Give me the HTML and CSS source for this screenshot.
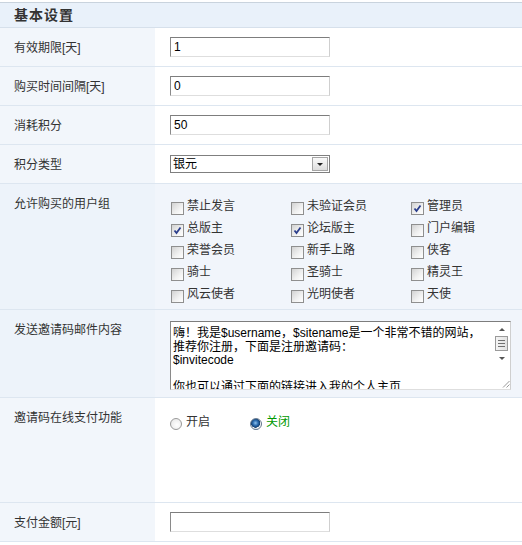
FILE: index.html
```html
<!DOCTYPE html>
<html lang="zh-CN">
<head>
    <meta charset="UTF-8">
    <title>基本设置</title>
    <link rel="stylesheet" href="styles.css">
</head>
<body>
    <table class="tb">
        <colgroup>
            <col class="c-lb">
            <col>
        </colgroup>
        <tr class="hd">
            <th colspan="2">基本设置</th>
        </tr>
        <tr>
            <td class="lb">有效期限[天]</td>
            <td class="vl"><input type="text" class="txt" value="1"></td>
        </tr>
        <tr>
            <td class="lb">购买时间间隔[天]</td>
            <td class="vl"><input type="text" class="txt" value="0"></td>
        </tr>
        <tr>
            <td class="lb">消耗积分</td>
            <td class="vl"><input type="text" class="txt" value="50"></td>
        </tr>
        <tr>
            <td class="lb">积分类型</td>
            <td class="vl">
                <select class="sel">
                    <option>银元</option>
                    <option>金币</option>
                </select>
            </td>
        </tr>
        <tr class="hover">
            <td class="lb">允许购买的用户组</td>
            <td class="vl vl-groups">
                <div class="groups">
                    <label><input type="checkbox" class="ck">禁止发言</label>
                    <label><input type="checkbox" class="ck">未验证会员</label>
                    <label><input type="checkbox" class="ck" checked>管理员</label>
                    <label><input type="checkbox" class="ck" checked>总版主</label>
                    <label><input type="checkbox" class="ck" checked>论坛版主</label>
                    <label><input type="checkbox" class="ck">门户编辑</label>
                    <label><input type="checkbox" class="ck">荣誉会员</label>
                    <label><input type="checkbox" class="ck">新手上路</label>
                    <label><input type="checkbox" class="ck">侠客</label>
                    <label><input type="checkbox" class="ck">骑士</label>
                    <label><input type="checkbox" class="ck">圣骑士</label>
                    <label><input type="checkbox" class="ck">精灵王</label>
                    <label><input type="checkbox" class="ck">风云使者</label>
                    <label><input type="checkbox" class="ck">光明使者</label>
                    <label><input type="checkbox" class="ck">天使</label>
                </div>
            </td>
        </tr>
        <tr class="hover">
            <td class="lb">发送邀请码邮件内容</td>
            <td class="vl vl-area">
                <div class="editor">
                    <textarea class="area">嗨！我是$username，$sitename是一个非常不错的网站，
推荐你注册，下面是注册邀请码：
$invitecode

你也可以通过下面的链接进入我的个人主页</textarea>
                    <div class="vbar">
                        <span class="arr up"></span>
                        <span class="thumb"><i></i><i></i><i></i></span>
                        <span class="arr down"></span>
                        <span class="grip">
                            <svg width="8" height="8" viewBox="0 0 8 8">
                                <path d="M7.5 1 L1 7.5 M7.5 4.5 L4.5 7.5" stroke="#999" stroke-width="1" fill="none"/>
                            </svg>
                        </span>
                    </div>
                </div>
            </td>
        </tr>
        <tr class="tall">
            <td class="lb">邀请码在线支付功能</td>
            <td class="vl">
                <div class="radios">
                    <label><input type="radio" class="rd" name="pay">开启</label>
                    <label class="on"><input type="radio" class="rd" name="pay" checked>关闭</label>
                </div>
            </td>
        </tr>
        <tr>
            <td class="lb">支付金额[元]</td>
            <td class="vl"><input type="text" class="txt" value=""></td>
        </tr>
    </table>
</body>
</html>
```

FILE: styles.css
```css
body {
    margin: 2px 0 0 0;
    padding: 0;
    background: #fff;
    color: #333;
    font-family: "Liberation Sans", "Noto Sans CJK SC", sans-serif;
    font-size: 12px;
}

.tb {
    width: 100%;
    table-layout: fixed;
    border-collapse: collapse;
    border-spacing: 0;
}

.tb col.c-lb {
    width: 155px;
}

.tb td,
.tb th {
    border-bottom: 1px solid #dde6f0;
    vertical-align: top;
}

/* 标题栏 */
.hd th {
    border-top: 1px solid #c9d3dd;
    border-bottom: 1px solid #d6e0eb;
    background-color: #e9f1fa;
    height: 24px;
    padding: 0 14px;
    text-align: left;
    font-size: 14px;
    font-weight: bold;
    letter-spacing: 1px;
    line-height: 24px;
    color: #333;
}

.lb {
    padding: 10px 0 8px 14px;
    line-height: 20px;
    background-color: #f2f6fb;
    white-space: nowrap;
}

.vl {
    padding: 9px 0 9px 15px;
    line-height: 20px;
    background-color: #fff;
}

.hover .lb {
    background-color: #edf3fa;
}

.hover .vl {
    background-color: #f1f5fb;
}

.tall td {
    height: 86px;
}

/* 输入框 */
.txt {
    box-sizing: border-box;
    width: 160px;
    height: 20px;
    margin: 0;
    padding: 1px 3px;
    border: 1px solid;
    border-color: #7d7d7d #cfcfcf #dedede #8a8a8a;
    background: #fff;
    color: #000;
    font-family: inherit;
    font-size: 12px;
    vertical-align: top;
    outline: none;
}

.sel {
    -webkit-appearance: none;
    appearance: none;
    box-sizing: border-box;
    width: 160px;
    height: 18px;
    margin: 1px 0 0 0;
    padding: 0 20px 0 2px;
    border: 1px solid #7f7f7f;
    border-radius: 0;
    background: #fff url("data:image/svg+xml,%3Csvg xmlns='http://www.w3.org/2000/svg' width='16' height='14'%3E%3Cdefs%3E%3ClinearGradient id='g' x1='0' y1='0' x2='0' y2='1'%3E%3Cstop offset='0' stop-color='%23fbfbfb'/%3E%3Cstop offset='1' stop-color='%23dcdcdc'/%3E%3C/linearGradient%3E%3C/defs%3E%3Crect x='0.5' y='0.5' width='15' height='13' fill='url(%23g)' stroke='%23a5a5a5'/%3E%3Cpath d='M5 6h6l-3 3z' fill='%23222'/%3E%3C/svg%3E") no-repeat right 1px center;
    color: #000;
    font-family: inherit;
    font-size: 12px;
    line-height: 16px;
    vertical-align: top;
    outline: none;
}

/* 用户组 */
.vl-groups {
    padding-top: 11px;
    padding-bottom: 4px;
}

.groups {
    display: grid;
    grid-template-columns: 120px 120px 120px;
}

.groups label,
.radios label {
    display: flex;
    align-items: center;
    height: 22px;
    white-space: nowrap;
}

.ck {
    -webkit-appearance: none;
    appearance: none;
    box-sizing: border-box;
    width: 13px;
    height: 13px;
    margin: 4px 3px 0 1px;
    border: 1px solid #8f8f8f;
    border-radius: 0;
    background: linear-gradient(135deg, #d2d2d2 0%, #f2f2f2 60%, #fff 100%);
    flex: none;
}

.ck:checked {
    background: url("data:image/svg+xml,%3Csvg xmlns='http://www.w3.org/2000/svg' width='11' height='11'%3E%3Cpath d='M2.5 5.5l2 2.5 4-5.5' stroke='%232b3e8c' stroke-width='1.8' fill='none'/%3E%3C/svg%3E") no-repeat center,
        linear-gradient(135deg, #d2d2d2 0%, #f2f2f2 60%, #fff 100%);
}

/* 邮件内容 */
.vl-area {
    padding-top: 11px;
    padding-bottom: 7px;
}

.editor {
    box-sizing: border-box;
    display: flex;
    width: 341px;
    height: 69px;
    border: 1px solid;
    border-color: #7d7d7d #cfcfcf #dedede #8a8a8a;
    background: #fff;
}

.area {
    flex: 1;
    margin: 0;
    padding: 5px 2px 0 2px;
    border: none;
    resize: none;
    overflow: hidden;
    color: #000;
    font-family: inherit;
    font-size: 12px;
    line-height: 13.5px;
    outline: none;
}

.vbar {
    display: flex;
    flex-direction: column;
    align-items: center;
    width: 17px;
    flex: none;
}

.arr {
    width: 0;
    height: 0;
    border-left: 3px solid transparent;
    border-right: 3px solid transparent;
}

.arr.up {
    margin-top: 6px;
    border-bottom: 3px solid #555;
}

.arr.down {
    margin-top: 6px;
    border-top: 3px solid #555;
}

.thumb {
    box-sizing: border-box;
    display: flex;
    flex-direction: column;
    justify-content: center;
    align-items: center;
    gap: 2px;
    width: 13px;
    height: 15px;
    margin-top: 5px;
    border: 1px solid #9a9a9a;
    background: linear-gradient(90deg, #f4f4f4, #e2e2e2);
}

.thumb i {
    display: block;
    width: 7px;
    height: 1px;
    background: #707070;
}

.grip {
    margin-top: auto;
    align-self: flex-end;
    height: 9px;
    line-height: 0;
}

/* 支付开关 */
.radios {
    display: flex;
    padding-top: 4px;
}

.radios label {
    width: 80px;
}

.radios label.on {
    color: #090;
}

.rd {
    -webkit-appearance: none;
    appearance: none;
    box-sizing: border-box;
    width: 12px;
    height: 12px;
    margin: 3px 4px 0 0;
    border: 1px solid #9a9a9a;
    border-radius: 50%;
    background: radial-gradient(circle at 60% 60%, #fff 0%, #e4e4e4 100%);
    flex: none;
}

.rd:checked {
    border-color: #6b7d91;
    background: radial-gradient(circle at 45% 40%, #8fc3ee 0%, #2f6fb2 30%, #123d6e 55%, #f6f6f6 60%, #dcdcdc 100%);
}
```
